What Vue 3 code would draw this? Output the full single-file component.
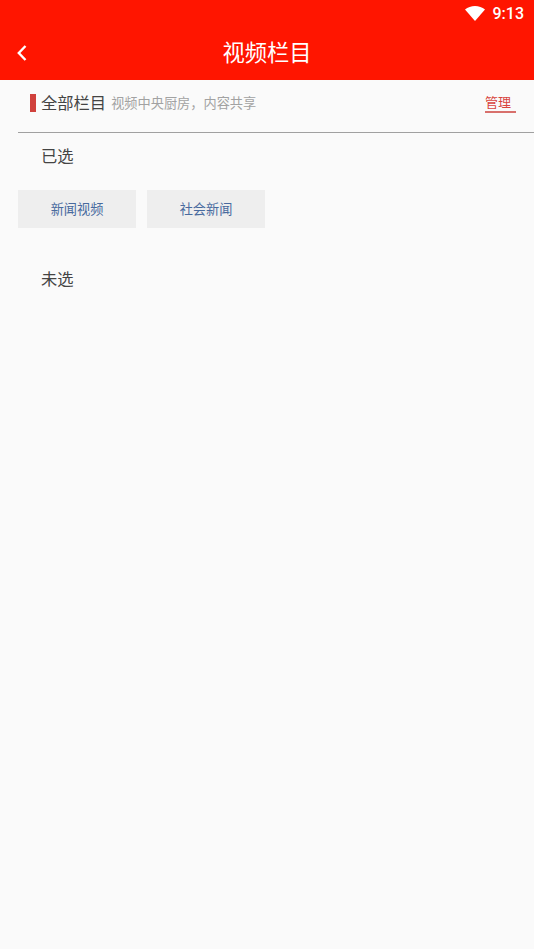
<script setup>
import {ref} from 'vue'

const selected = ref(['新闻视频', '社会新闻'])
</script>

<template>
  <div class="page">
    <header class="top">
      <div class="status">
        <svg class="wifi" viewBox="0 0 20 15" width="20" height="15">
          <path d="M0 3.600C2.800 1.300 6.200 0 10 0s7.200 1.300 10 3.600L10 15z" fill="#fff"/>
        </svg>
        <span class="time">9:13</span>
      </div>
      <div class="bar">
        <svg class="back" viewBox="0 0 12 18" width="12" height="18">
          <path d="M9.500 2 L2.800 9 L9.500 16" fill="none" stroke="#fff" stroke-width="2.400"/>
        </svg>
        <h1>视频栏目</h1>
      </div>
    </header>

    <section class="head">
      <i class="mark"></i>
      <span class="name">全部栏目</span>
      <span class="sub">视频中央厨房，内容共享</span>
      <a class="manage">管理</a>
    </section>

    <p class="label first">已选</p>
    <div class="tags">
      <div v-for="item in selected" :key="item" class="tag">{{item}}</div>
    </div>

    <p class="label second">未选</p>
  </div>
</template>

<style>
html, body {
  margin: 0;
  background: #fafafa;
}
</style>

<style scoped>
.page {
  min-height: 949px;
  background: #fafafa;
  font-family: "Roboto", "Noto Sans CJK SC", sans-serif;
  color: #444;
}
.top {
  height: 80px;
  background: #ff1500;
  color: #fff;
}
.status {
  height: 27px;
  display: flex;
  justify-content: flex-end;
  align-items: center;
  gap: 8px;
  padding-right: 10px;
}
.wifi {
  display: block;
}
.time {
  font-size: 16px;
  font-weight: 500;
  line-height: 27px;
}
.bar {
  height: 53px;
  padding-bottom: 6px;
  box-sizing: border-box;
  position: relative;
  display: flex;
  align-items: center;
  justify-content: center;
}
.back {
  position: absolute;
  left: 16px;
  top: 17px;
}
h1 {
  margin: 0;
  font-size: 22.300px;
  font-weight: 400;
}
.head {
  height: 53px;
  margin-left: 18px;
  padding: 0 18px 8px 12px;
  box-sizing: border-box;
  border-bottom: 1px solid #a0a0a0;
  display: flex;
  align-items: center;
}
.mark {
  width: 6px;
  height: 18px;
  background: #d0413c;
  margin: 2px 5px 0 0;
}
.name {
  font-size: 16.300px;
  color: #444;
}
.sub {
  font-size: 13.200px;
  color: #a2a2a2;
  margin-left: 5px;
}
.manage {
  margin-left: auto;
  font-size: 13px;
  color: #d8453e;
  border-bottom: 2px solid #d8706c;
  line-height: 16px;
  padding-top: 4px;
  width: 31px;
}
.label {
  margin: 0;
  padding-left: 41px;
  font-size: 16.300px;
  line-height: 22px;
  color: #444;
}
.first {
  margin-top: 13px;
}
.second {
  margin-top: 41px;
}
.tags {
  display: flex;
  gap: 11px;
  margin: 22px 0 0 18px;
}
.tag {
  width: 118px;
  height: 38px;
  padding-bottom: 1px;
  box-sizing: border-box;
  background: #eeeeee;
  color: #486a9e;
  font-size: 13.200px;
  display: flex;
  align-items: center;
  justify-content: center;
}
</style>
